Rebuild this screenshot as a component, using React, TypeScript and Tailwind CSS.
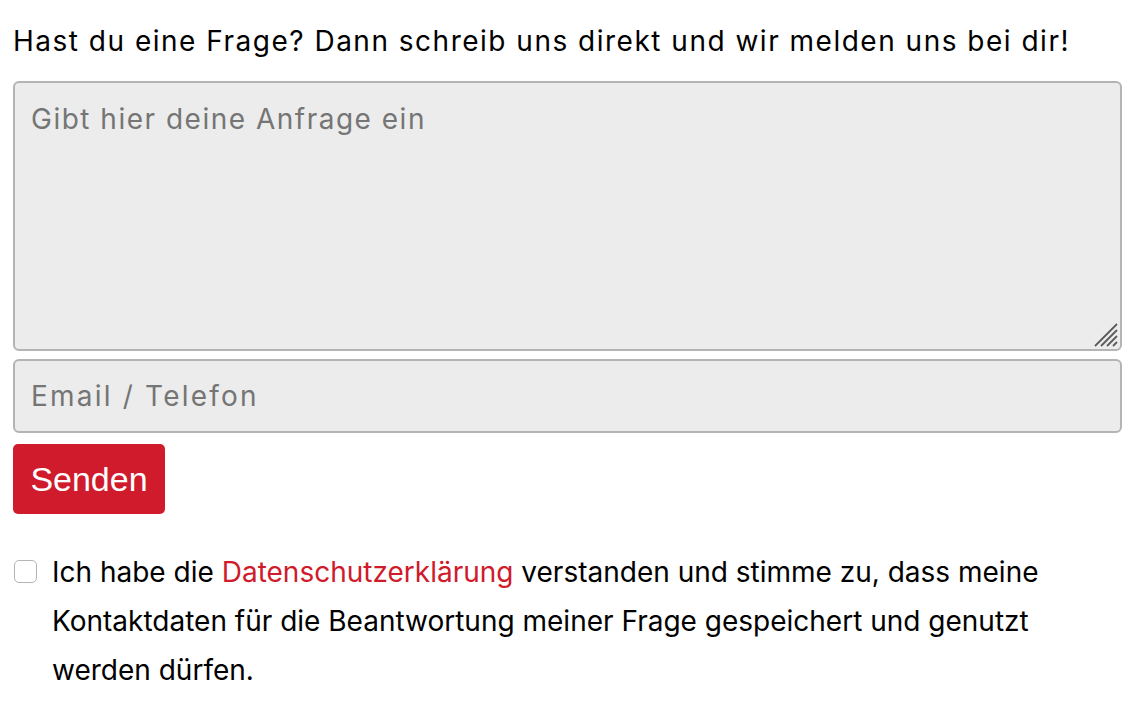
import React from "react";

export default function App() {
  return (
    <div className="w-[1134px] h-[708px] bg-white pl-[13px] pr-[12px] pt-[19px] text-black" style={{ fontFamily: "Inter, 'Open Sans', sans-serif" }}>
      <p className="text-[28px] leading-[44px] tracking-[1.5px]">Hast du eine Frage? Dann schreib uns direkt und wir melden uns bei dir!</p>
      <div className="mt-[18px] relative">
        <textarea
          placeholder="Gibt hier deine Anfrage ein"
          className="block w-full h-[270px] bg-[#ececec] border-2 border-[#b4b4b4] rounded-[6px] px-[16px] py-[17px] text-[28px] tracking-[1.5px] leading-[38px] placeholder:text-[#757575] outline-none resize-none"
        />
        <svg className="absolute right-[4px] bottom-[4px] pointer-events-none" width="25" height="25" viewBox="0 0 25 25">
          <line x1="2" y1="24" x2="24" y2="2" stroke="#5a5a5a" strokeWidth="1.8" />
          <line x1="8" y1="24" x2="24" y2="8" stroke="#5a5a5a" strokeWidth="1.8" />
          <line x1="14" y1="24" x2="24" y2="14" stroke="#5a5a5a" strokeWidth="1.8" />
          <line x1="20" y1="24" x2="24" y2="20" stroke="#5a5a5a" strokeWidth="1.8" />
        </svg>
      </div>
      <input
        placeholder="Email / Telefon"
        className="mt-[8px] block w-full h-[74px] bg-[#ececec] border-2 border-[#b4b4b4] rounded-[6px] px-[16px] text-[28px] tracking-[2.2px] placeholder:text-[#757575] outline-none"
      />
      <button className="mt-[11px] w-[152px] h-[70px] bg-[#cf1b2b] text-white rounded-[5px] text-[34px]" style={{ fontFamily: "'Liberation Sans', Arial, sans-serif" }}>Senden</button>
      <div className="mt-[34px] flex items-start">
        <span className="mt-[12px] ml-[1px] w-[23px] h-[23px] shrink-0 border border-[#b4b4b4] rounded-[5px] bg-white" />
        <p className="ml-[15px] text-[28px] leading-[49px] tracking-[0px]">
          Ich habe die <span className="text-[#cf1b2b]">Datenschutzerklärung</span> verstanden und stimme zu, dass meine Kontaktdaten für die Beantwortung meiner Frage gespeichert und genutzt werden dürfen.
        </p>
      </div>
    </div>
  );
}
